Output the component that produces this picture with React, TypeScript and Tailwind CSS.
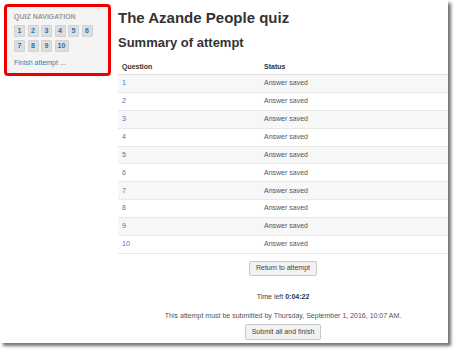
const rows = [1, 2, 3, 4, 5, 6, 7, 8, 9, 10];

function NavButton({ n }: { n: number }) {
  return (
    <div
      className={`flex h-[12px] items-center justify-center rounded-[1px] border border-[#d2d2d2] bg-[#dedede] text-[7px] font-bold text-[#2a6fa8] ${
        n === 10 ? "w-[14px]" : "w-[11px]"
      }`}
    >
      {n}
    </div>
  );
}

export default function App() {
  return (
    <div
      className="h-[354px] w-[458px] bg-white"
      style={{ fontFamily: '"Liberation Sans", Arial, sans-serif' }}
    >
      <div className="flex h-[343px] w-[448px] bg-white shadow-[3px_3px_3px_rgba(0,0,0,0.55)]">
        {/* left block */}
        <div className="w-[118px] shrink-0 pl-[4px] pt-[4px]">
          <div className="h-[72px] w-[107px] rounded-[4px] border-[3px] border-[#ee0000] bg-[#f4f4f4] px-[7px] pt-[5px]">
            <div className="text-[7px] font-bold leading-[9px] text-[#999]">QUIZ NAVIGATION</div>
            <div className="mt-[4px] flex gap-[2.5px]">
              {[1, 2, 3, 4, 5, 6].map((n) => (
                <NavButton key={n} n={n} />
              ))}
            </div>
            <div className="mt-[3px] flex gap-[2.5px]">
              {[7, 8, 9, 10].map((n) => (
                <NavButton key={n} n={n} />
              ))}
            </div>
            <div className="mt-[6px] text-[7px] leading-[9px] text-[#3a7ab5]">Finish attempt ...</div>
          </div>
        </div>

        {/* main */}
        <div className="flex-1 pt-[9px] text-[#333]">
          <h1 className="text-[15px] font-bold leading-[18px]">The Azande People quiz</h1>
          <h2 className="mt-[8px] text-[13px] font-bold leading-[16px]">Summary of attempt</h2>
          <div className="mt-[10px] text-[7px]">
            <div className="flex h-[14px] items-center border-b border-[#e2e2e2] font-bold">
              <div className="w-[146px] pl-[4px]">Question</div>
              <div>Status</div>
            </div>
            {rows.map((n) => (
              <div
                key={n}
                className={`flex h-[17.9px] items-center border-b border-[#e8e8e8] ${
                  n % 2 === 1 ? "bg-[#f7f7f7]" : "bg-white"
                }`}
              >
                <div className="w-[146px] pl-[4px] text-[#3a7ab5]">{n}</div>
                <div className="text-[#555]">Answer saved</div>
              </div>
            ))}
          </div>
          <div className="flex flex-col items-center text-[7px]">
            <div className="mt-[7px] flex h-[15px] items-center rounded-[2px] border border-[#c8c8c8] bg-[#f2f2f2] px-[6px] text-[#444]">
              Return to attempt
            </div>
            <div className="mt-[16px] leading-[9px] text-[#444]">
              Time left <span className="font-bold text-[#333]">0:04:22</span>
            </div>
            <div className="mt-[10px] leading-[9px] text-[#555]">
              This attempt must be submitted by Thursday, September 1, 2016, 10:07 AM.
            </div>
            <div className="mt-[4px] flex h-[16px] items-center rounded-[2px] border border-[#c8c8c8] bg-[#f2f2f2] px-[6px] text-[#444]">
              Submit all and finish
            </div>
          </div>
        </div>
      </div>
    </div>
  );
}
